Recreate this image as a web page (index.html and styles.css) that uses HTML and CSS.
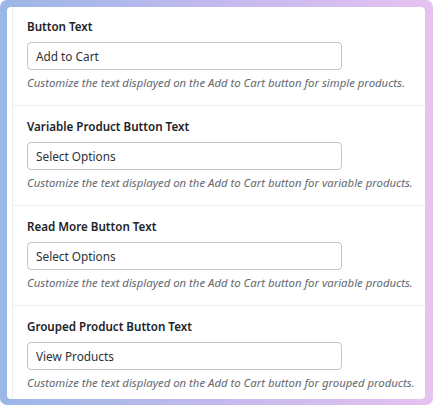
FILE: index.html
```html
<!DOCTYPE html>
<html lang="en">
<head>
  <meta charset="UTF-8">
  <meta name="viewport" content="width=device-width, initial-scale=1.0">
  <title>Button Text Settings</title>
  <link rel="stylesheet" href="styles.css">
</head>
<body>

  <div class="panel">
    <div class="form">
      <div class="row">
        <label class="label" for="simple">Button Text</label>
        <input class="field" id="simple" type="text" value="Add to Cart">
        <p class="desc">Customize the text displayed on the Add to Cart button for simple products.</p>
      </div>
      <div class="row">
        <label class="label" for="variable">Variable Product Button Text</label>
        <input class="field" id="variable" type="text" value="Select Options">
        <p class="desc">Customize the text displayed on the Add to Cart button for variable products.</p>
      </div>
      <div class="row">
        <label class="label" for="readmore">Read More Button Text</label>
        <input class="field" id="readmore" type="text" value="Select Options">
        <p class="desc">Customize the text displayed on the Add to Cart button for variable products.</p>
      </div>
      <div class="row">
        <label class="label" for="grouped">Grouped Product Button Text</label>
        <input class="field" id="grouped" type="text" value="View Products">
        <p class="desc">Customize the text displayed on the Add to Cart button for grouped products.</p>
      </div>
    </div>
  </div>

</body>
</html>
```

FILE: styles.css
```css
html {
  height: 100%;
  background: #fff;
}
body {
  height: 100%;
  margin: 0;
  font-family: "Noto Sans", "Open Sans", sans-serif;
  background: linear-gradient(90deg, #9ab7e7, #c3b9ee 50%, #e6c2f1);
  border-radius: 7px;
  padding: 7px 8px 6px 7px;
  box-sizing: border-box;
  overflow: hidden;
}
.panel {
  background: #fff;
  height: 100%;
  border-radius: 4px;
  padding-left: 5px;
  box-sizing: border-box;
}
.form {
  border-left: 1px solid #ededed;
  height: 100%;
}
.row {
  height: 100px;
  box-sizing: border-box;
  padding: 13px 0 0 14px;
  border-bottom: 1px solid #f0f0f1;
}
.row:first-child {
  height: 99px;
  padding-top: 12px;
}
.row:last-child {
  border-bottom: none;
}
.label {
  display: block;
  font-size: 11.6px;
  line-height: 16px;
  font-weight: 600;
  color: #1d2327;
}
.field {
  display: block;
  box-sizing: border-box;
  width: 315px;
  height: 28px;
  margin-top: 7px;
  padding: 0 8px;
  font-family: inherit;
  font-size: 11.8px;
  color: #2c3338;
  border: 1px solid #c3c4c7;
  border-radius: 4px;
  background: #fff;
}
.desc {
  margin: 5px 0 0;
  font-size: 11.35px;
  line-height: 16px;
  font-style: italic;
  color: #646970;
}
```
